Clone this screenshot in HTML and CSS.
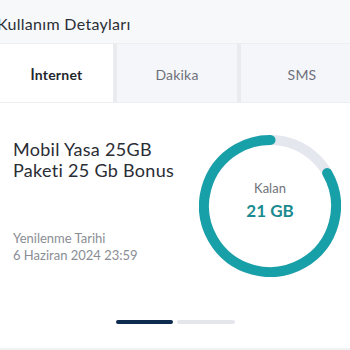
FILE: index.html
```html
<html>
	<head>
		<title>Kullanım Detayları</title>
		<link rel="stylesheet" href="styles.css">
	</head>
	<body>
		<div id='usage'>
			<div class='header'><span class='title'>Kullanım Detayları</span></div>
			<div class='tabs'>
				<div class='tab active'>İnternet</div>
				<div class='tab'>Dakika</div>
				<div class='tab'>SMS</div>
			</div>
			<div class='package'>
				<div class='info'>
					<div class='name'>Mobil Yasa 25GB<br>Paketi 25 Gb Bonus</div>
					<div class='renew'>Yenilenme Tarihi<br>6 Haziran 2024 23:59</div>
				</div>
				<div class='ring'>
					<svg width='142' height='142' viewBox='0 0 142 142'>
						<circle cx='71' cy='71' r='66' fill='none' stroke='#e5e7ee' stroke-width='10'/>
						<circle cx='71' cy='71' r='66' fill='none' stroke='#18a0a8' stroke-width='10' stroke-linecap='round' stroke-dasharray='345.6 500' transform='rotate(-30 71 71)'/>
					</svg>
					<div class='left'>
						<span class='label'>Kalan</span>
						<span class='amount'>21 GB</span>
					</div>
				</div>
			</div>
			<div class='pager'>
				<span class='dot on'></span>
				<span class='dot'></span>
			</div>
			<div class='footer'></div>
		</div>
	</body>
</html>
```

FILE: styles.css
```css
body{
	margin:0;
	width:350px;
	height:350px;
	overflow:hidden;
	background:#fff;
	font-family:Lato,"Noto Sans",sans-serif;
}
#usage{
	width:350px;
	overflow:hidden;
}
.header{
	height:43px;
	background:#f7f8fa;
	padding-top:12px;
	box-sizing:border-box;
}
.header .title{
	display:block;
	margin-left:-3px;
	font-size:16px;
	letter-spacing:0.3px;
	line-height:24px;
	color:#2b2e35;
}
.tabs{
	display:grid;
	grid-template-columns:113px 120px 122px;
	column-gap:4px;
	width:363px;
	height:58px;
	background:#e9ebef;
	border-top:1px solid #eceef2;
	border-bottom:1px solid #eceef2;
}
.tab{
	display:flex;
	align-items:center;
	justify-content:center;
	background:#f5f6f9;
	font-size:14px;
	letter-spacing:0.2px;
	color:#6d7079;
	padding-top:3px;
	box-sizing:border-box;
}
.tab.active{
	background:#fff;
	color:#23262d;
	font-weight:bold;
}
.package{
	display:flex;
	padding:32px 9px 0 13px;
}
.info{
	flex:1;
}
.name{
	margin-top:4px;
	font-size:18px;
	letter-spacing:0.3px;
	line-height:21px;
	color:#2a2d34;
}
.renew{
	margin-top:49px;
	font-size:13px;
	line-height:17px;
	color:#8a8d94;
}
.ring{
	display:grid;
	width:142px;
	height:142px;
}
.ring svg,.ring .left{
	grid-area:1/1;
}
.ring .left{
	display:flex;
	flex-direction:column;
	align-items:center;
	justify-content:center;
	gap:4px;
	padding-bottom:10px;
}
.label{
	font-size:13px;
	line-height:16px;
	color:#6f727a;
}
.amount{
	font-size:17px;
	line-height:22px;
	font-weight:bold;
	color:#1b8a90;
}
.pager{
	display:flex;
	justify-content:center;
	gap:4px;
	margin-top:43px;
	padding-left:1px;
}
.dot{
	width:58px;
	height:4px;
	border-radius:2px;
	background:#e4e6ec;
}
.dot.on{
	width:57px;
	background:#0d2a4f;
}
.footer{
	margin-top:24px;
	height:4px;
	background:#f1f2f4;
}
```
